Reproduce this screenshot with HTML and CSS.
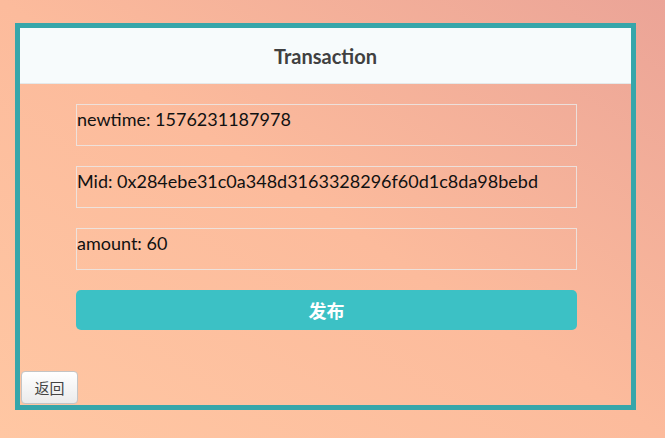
FILE: index.html
```html
<!DOCTYPE html>
<html>
<head>
<meta charset="utf-8">
<link rel="stylesheet" href="styles.css">
</head>
<body>
<div class="page">
  <div class="card">
    <div class="card-header"><h1 class="title">Transaction</h1></div>
    <div class="card-body">
      <div class="field">newtime: 1576231187978</div>
      <div class="field">Mid: 0x284ebe31c0a348d3163328296f60d1c8da98bebd</div>
      <div class="field">amount: 60</div>
      <button class="publish">发布</button>
    </div>
    <button class="back">返回</button>
  </div>
</div>
</body>
</html>
```
FILE: styles.css
```css
html, body {
  margin: 0;
  padding: 0;
}
body {
  width: 665px;
  height: 438px;
  overflow: hidden;
  background: linear-gradient(to top right, #ffc7a3 0%, #fcbb9c 50%, #eba497 100%);
  font-family: "Lato", "Noto Sans CJK SC", sans-serif;
}
.page {
  padding: 23px 0 0 15px;
}
.card {
  width: 611px;
  height: 377px;
  border: 5px solid #36a6aa;
  display: flex;
  flex-direction: column;
}
.card-header {
  height: 55px;
  background: #f7fbfc;
  border-bottom: 1px solid #e4e9ea;
  display: flex;
  align-items: center;
  justify-content: center;
}
.title {
  margin: 0;
  font-size: 20px;
  font-weight: 700;
  color: #404040;
}
.card-body {
  padding: 20px 0 0 56px;
  display: flex;
  flex-direction: column;
  gap: 20px;
}
.field {
  width: 499px;
  height: 40px;
  border: 1px solid rgba(235, 232, 230, 0.85);
  font-size: 18px;
  line-height: 28px;
  color: #111;
}
.publish {
  width: 501px;
  height: 40px;
  border: none;
  border-radius: 5px;
  background: #3cc1c5;
  color: #fff;
  font-family: "Noto Sans CJK SC", sans-serif;
  font-weight: 700;
  font-size: 18px;
  padding: 0;
}
.back {
  margin: 41px 0 0 1px;
  width: 57px;
  height: 33px;
  border: 1px solid #c4c4c4;
  border-radius: 4px;
  background: linear-gradient(#ffffff, #ebebeb);
  font-family: "Noto Sans CJK SC", sans-serif;
  font-size: 15px;
  color: #444;
  padding: 0;
  align-self: flex-start;
}
```
